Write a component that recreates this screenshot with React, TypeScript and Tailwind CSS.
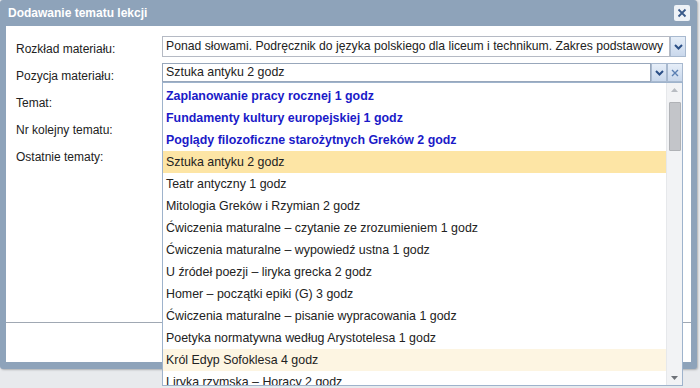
import React from "react";

const labels = [
  "Rozkład materiału:",
  "Pozycja materiału:",
  "Temat:",
  "Nr kolejny tematu:",
  "Ostatnie tematy:",
];

interface Item {
  text: string;
  bold?: boolean;
  selected?: boolean;
  hover?: boolean;
}

const items: Item[] = [
  { text: "Zaplanowanie pracy rocznej 1 godz", bold: true },
  { text: "Fundamenty kultury europejskiej 1 godz", bold: true },
  { text: "Poglądy filozoficzne starożytnych Greków 2 godz", bold: true },
  { text: "Sztuka antyku 2 godz", selected: true },
  { text: "Teatr antyczny 1 godz" },
  { text: "Mitologia Greków i Rzymian 2 godz" },
  { text: "Ćwiczenia maturalne – czytanie ze zrozumieniem 1 godz" },
  { text: "Ćwiczenia maturalne – wypowiedź ustna 1 godz" },
  { text: "U źródeł poezji – liryka grecka 2 godz" },
  { text: "Homer – początki epiki (G) 3 godz" },
  { text: "Ćwiczenia maturalne – pisanie wypracowania 1 godz" },
  { text: "Poetyka normatywna według Arystotelesa 1 godz" },
  { text: "Król Edyp Sofoklesa 4 godz", hover: true },
  { text: "Liryka rzymska – Horacy 2 godz" },
];

function Chevron() {
  return (
    <svg width="9" height="6" viewBox="0 0 9 6">
      <path d="M1 1 L4.5 4.5 L8 1" stroke="#2b4f86" strokeWidth="2" fill="none" />
    </svg>
  );
}

function Trigger({ children }: { children: React.ReactNode }) {
  return (
    <div className="w-[16px] shrink-0 self-stretch flex items-center justify-center border border-[#a8b9cf] bg-gradient-to-b from-[#e6eef8] to-[#c9d8ec]">
      {children}
    </div>
  );
}

export default function App() {
  return (
    <div
      className="w-[700px] h-[388px] bg-[#e8eaed] relative overflow-hidden text-[12px] text-[#222]"
      style={{ fontFamily: "Tahoma, 'Liberation Sans', Arial, sans-serif" }}
    >
      <div className="w-[697px] h-[369px] bg-[#8ea3ba] rounded-[3px] flex flex-col px-[6px] pb-[7px] shadow-[1px_1px_2px_rgba(0,0,0,0.25)]">
        <div className="h-[26px] flex items-center justify-between pl-[2px] pr-[1px]">
          <span className="text-white font-bold text-[12px]">Dodawanie tematu lekcji</span>
          <div className="w-[16px] h-[16px] bg-[#eef2f7] rounded-[2px] flex items-center justify-center">
            <svg width="10" height="10" viewBox="0 0 10 10">
              <path d="M1.5 1.5 L8.5 8.5 M8.5 1.5 L1.5 8.5" stroke="#3a5a8a" strokeWidth="1.8" />
            </svg>
          </div>
        </div>
        <div className="flex-1 bg-white flex flex-col relative">
          <div className="flex-1 flex pt-[9px] pl-[10px] pr-[5px]">
            <div className="w-[146px] shrink-0 flex flex-col">
              {labels.map((l) => (
                <div key={l} className="h-[27px] flex items-center">
                  {l}
                </div>
              ))}
            </div>
            <div className="flex-1 min-w-0 flex flex-col gap-[6px] pt-[1px]">
              <div className="flex h-[21px]">
                <div className="flex-1 min-w-0 border border-[#b5bac4] flex items-center px-[3px] text-[12.2px] overflow-hidden whitespace-nowrap">
                  Ponad słowami. Podręcznik do języka polskiego dla liceum i technikum. Zakres podstawowy
                </div>
                <Trigger>
                  <Chevron />
                </Trigger>
              </div>
              <div className="flex h-[19px] mr-[3px]">
                <div className="flex-1 min-w-0 border border-[#98a7bb] flex items-center px-[3px] text-[12.4px]">
                  Sztuka antyku 2 godz
                </div>
                <Trigger>
                  <Chevron />
                </Trigger>
                <Trigger>
                  <svg width="8" height="8" viewBox="0 0 8 8">
                    <path d="M1 1 L7 7 M7 1 L1 7" stroke="#5a7fb2" strokeWidth="1.4" />
                  </svg>
                </Trigger>
              </div>
            </div>
          </div>
          <div className="h-[40px] border-t border-[#a0a8b3]" />

          <div className="absolute left-[156px] top-[56px] w-[521px] h-[304px] bg-white border border-[#9eb3cc] flex overflow-hidden">
            <div className="flex-1 flex flex-col pt-[2px]">
              {items.map((it) => (
                <div
                  key={it.text}
                  className={`h-[22px] shrink-0 flex items-center px-[3px] whitespace-nowrap text-[12.4px] ${
                    it.bold ? "font-bold text-[#1a1ac8]" : ""
                  } ${it.selected ? "bg-[#fde5a5]" : ""} ${it.hover ? "bg-[#fdf5e2]" : ""}`}
                >
                  {it.text}
                </div>
              ))}
            </div>
            <div className="w-[16px] shrink-0 bg-[#f2f3f5] flex flex-col items-center border-l border-[#e6e8eb]">
              <div className="h-[14px] flex items-center justify-center">
                <svg width="7" height="4" viewBox="0 0 7 4">
                  <path d="M0 4 L3.5 0 L7 4 Z" fill="#b8bcc2" />
                </svg>
              </div>
              <div className="w-[12px] h-[49px] mt-[5px] bg-[#c3c5c9] rounded-[1px] border border-[#b0b2b6]" />
              <div className="flex-1" />
              <div className="h-[14px] flex items-center justify-center">
                <svg width="7" height="4" viewBox="0 0 7 4">
                  <path d="M0 0 L3.5 4 L7 0 Z" fill="#6e7278" />
                </svg>
              </div>
            </div>
          </div>
        </div>
      </div>
    </div>
  );
}
